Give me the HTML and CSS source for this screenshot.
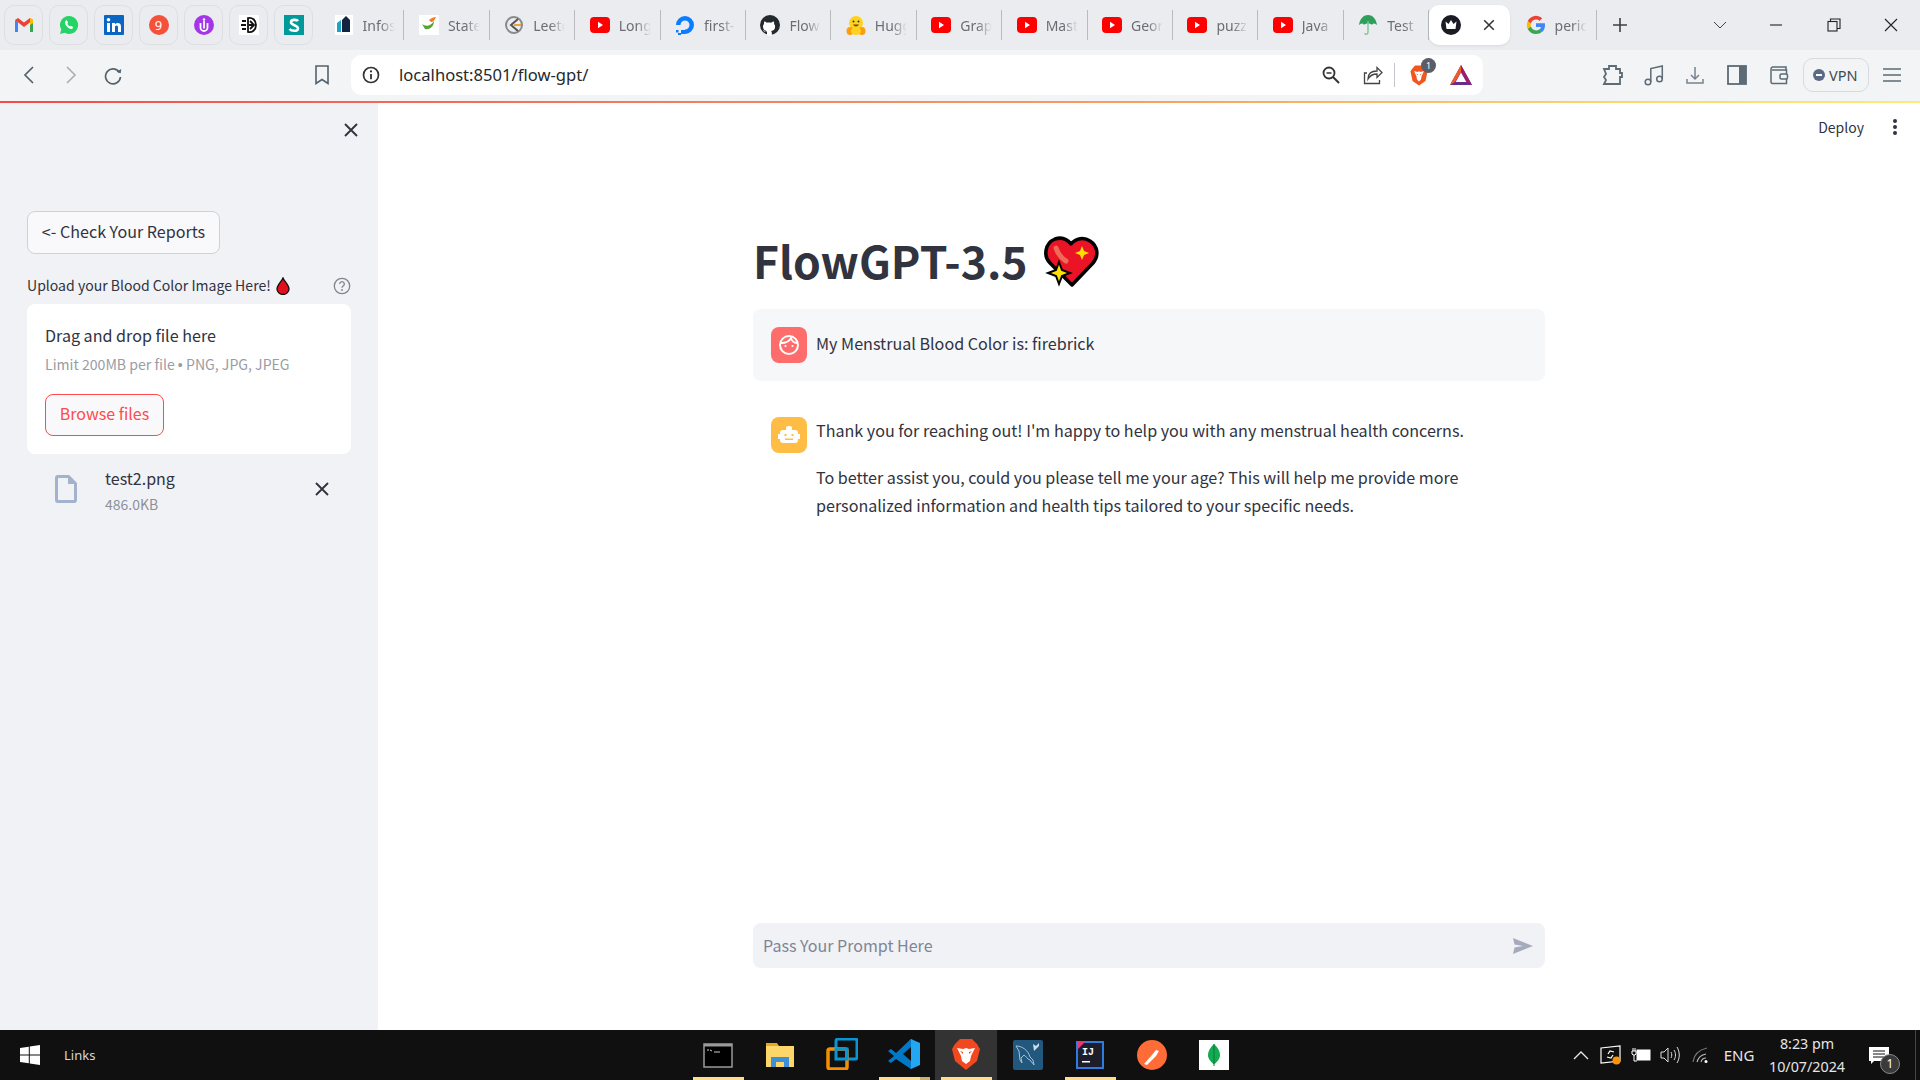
FILE: index.html
```html
<!DOCTYPE html>
<html lang="en">
<head>
<meta charset="utf-8">
<title>FlowGPT-3.5</title>
<link rel="stylesheet" href="styles.css">
</head>
<body>
<svg class="defs" aria-hidden="true">
  <symbol id="yt" viewBox="0 0 20 16"><rect width="20" height="16" y="0" rx="4" fill="#f00"/><path d="M8 4.800l5 3.200-5 3.200z" fill="#fff"/></symbol>
  <symbol id="x" viewBox="0 0 20 20"><path d="M4 4l12 12M16 4L4 16" fill="none" stroke="currentColor" stroke-width="1.900"/></symbol>
</svg>
<div class="page">
  <header class="tabstrip">
    <div class="pin"><svg width="20" height="16" viewBox="0 0 20 16"><path d="M1 15V3l3 2v10z" fill="#4285f4"/><path d="M19 15V3l-3 2v10z" fill="#34a853"/><path d="M1 3l9 7 9-7-3-2-6 4.500L4 1z" fill="#ea4335"/><path d="M16 1l3 2v3l-3 2z" fill="#fbbc04"/></svg></div>
    <div class="pin"><svg width="20" height="20" viewBox="0 0 20 20"><path d="M10 1a9 9 0 0 0-7.700 13.600L1 19l4.600-1.200A9 9 0 1 0 10 1z" fill="#25d366"/><path d="M7 5.500c-1.500 1-1.500 3 .5 5.500s4.500 3.500 6 2.500l.8-1.300-2.300-1.400-1 .8c-1-.5-2-1.500-2.700-2.800l.8-1-1.200-2.500z" fill="#fff"/></svg></div>
    <div class="pin"><svg width="20" height="20" viewBox="0 0 20 20"><rect width="20" height="20" rx="1" fill="#0a66c2"/><rect x="3" y="8" width="3" height="9" fill="#fff"/><circle cx="4.500" cy="4.800" r="1.800" fill="#fff"/><path d="M8 8h3v1.500c1-2 6-2.500 6 2V17h-3v-5c0-2-3-2-3 0v5H8z" fill="#fff"/></svg></div>
    <div class="pin"><span class="nine">9</span></div>
    <div class="pin"><svg width="20" height="20" viewBox="0 0 20 20"><circle cx="10" cy="10" r="10" fill="#a436ea"/><path d="M6.500 8v4.500a3.500 3.500 0 0 0 7 0V8" fill="none" stroke="#fff" stroke-width="1.800"/><path d="M10 6v7.500" stroke="#fff" stroke-width="1.800"/><circle cx="10" cy="4.500" r="1.200" fill="#fff"/></svg></div>
    <div class="pin"><svg width="20" height="20" viewBox="0 0 20 20"><rect width="20" height="20" fill="#fff"/><path d="M3 6h4M2 10h5M3 14h4M9 3c4-1 8 2 8 7s-4 8-8 7zM11 6l4 4-4 4M10 10h5" fill="none" stroke="#111" stroke-width="1.800"/></svg></div>
    <div class="pin"><svg width="20" height="20" viewBox="0 0 20 20"><rect width="20" height="20" fill="#009a9a"/><path d="M14 6c-1-1.500-7-2-7 1.300S14 10 14 13.500 7 16 5.500 14" fill="none" stroke="#fff" stroke-width="2.600"/></svg></div>

    <div class="tab"><svg class="fav" width="20" height="24" viewBox="0 0 20 24"><rect x="1" y="2" width="18" height="20" fill="#fff"/><path d="M3 10l4-3v12H3z" fill="#1aa5c7"/><path d="M8 7l4-4 4 4v12H8z" fill="#14233f"/></svg><span class="tab-t">Infos</span></div>
    <div class="tab"><svg class="fav" width="20" height="24" viewBox="0 0 20 24"><rect y="2" width="20" height="20" fill="#fff"/><path d="M3 11c4 3 9 2 12-3 0 6-5 9-9 8z" fill="#55a630"/><path d="M10 7c2-2 5-3 7-3-1 3-3 5-5 5z" fill="#f47b20"/></svg><span class="tab-t">State</span></div>
    <div class="tab"><svg class="fav" width="20" height="24" viewBox="0 0 20 24"><circle cx="10" cy="12" r="8" fill="none" stroke="#8a8a8a" stroke-width="2"/><path d="M14 6l-7 6 7 6" fill="none" stroke="#555" stroke-width="2"/><path d="M10 12h7" stroke="#e8a33d" stroke-width="2"/></svg><span class="tab-t">Leetc</span></div>
    <div class="tab"><svg class="fav" width="20" height="16"><use href="#yt"/></svg><span class="tab-t">Long</span></div>
    <div class="tab"><svg class="fav" width="20" height="24" viewBox="0 0 20 24"><path d="M10 21a9 9 0 1 0-9-9h4.500A4.500 4.500 0 1 1 10 16.500z" fill="#0a7cff"/><path d="M6 17h4v4H6zM3 20h3v2H3zM1 17h2.500v2.500H1z" fill="#0a7cff"/></svg><span class="tab-t">first-</span></div>
    <div class="tab"><svg class="fav" width="20" height="24" viewBox="0 0 20 24"><circle cx="10" cy="12" r="10" fill="#24292e"/><path d="M7 22v-3c-3 .5-3.500-1.500-4-2 1 0 1.500 1 2 1.500 1 .5 2 .2 2-.5-3-.5-4-2-4-4.500 0-1 .5-2 1-2.500-.2-.8 0-1.800.3-2.500 1 0 2 .7 2.500 1.200 1.500-.4 3-.4 4.500 0 .5-.5 1.500-1.200 2.500-1.200.3.700.5 1.700.3 2.500.5.500 1 1.500 1 2.500 0 2.500-1 4-4 4.500.5.500.7 1 .7 2v3z" fill="#fff"/></svg><span class="tab-t">Flow</span></div>
    <div class="tab"><svg class="fav" width="20" height="24" viewBox="0 0 20 24"><circle cx="10" cy="10" r="7" fill="#ffd21e"/><ellipse cx="4" cy="18" rx="3.500" ry="4" fill="#ff9d0b"/><ellipse cx="16" cy="18" rx="3.500" ry="4" fill="#ff9d0b"/><ellipse cx="10" cy="18" rx="5" ry="4" fill="#ffd21e"/><circle cx="7.500" cy="8.500" r="1" fill="#333"/><circle cx="12.500" cy="8.500" r="1" fill="#333"/><path d="M7 11.500c1.500 2.500 4.500 2.500 6 0z" fill="#7a3b2e"/></svg><span class="tab-t">Hugg</span></div>
    <div class="tab"><svg class="fav" width="20" height="16"><use href="#yt"/></svg><span class="tab-t">Grap</span></div>
    <div class="tab"><svg class="fav" width="20" height="16"><use href="#yt"/></svg><span class="tab-t">Mast</span></div>
    <div class="tab"><svg class="fav" width="20" height="16"><use href="#yt"/></svg><span class="tab-t">Geor</span></div>
    <div class="tab"><svg class="fav" width="20" height="16"><use href="#yt"/></svg><span class="tab-t">puzz</span></div>
    <div class="tab"><svg class="fav" width="20" height="16"><use href="#yt"/></svg><span class="tab-t">Java</span></div>
    <div class="tab"><svg class="fav" width="20" height="24" viewBox="0 0 20 24"><path d="M1 12C2 5 6 2 10 2s8 3 9 10c-2-2-4-2-5 0-1-2-7-2-8 0-1-2-3-2-5 0z" fill="#2e9e5b"/><path d="M10 8v11c0 3-3 3-3 1" fill="none" stroke="#7cc49a" stroke-width="1.400"/></svg><span class="tab-t">Test</span></div>
    <div class="tab tab-active"><svg width="20" height="20" viewBox="0 0 20 20"><circle cx="10" cy="10" r="10" fill="#1b1b24"/><path d="M4.500 6.500l3 2.500L10 5l2.500 4 3-2.500-1 7.500h-9z" fill="#fff"/></svg><svg class="tab-x" width="16" height="16"><use href="#x"/></svg></div>
    <div class="tab tab-last"><svg class="fav" width="20" height="20" viewBox="0 0 20 20"><path d="M19 10.200c0-.7 0-1.300-.2-1.900H10v3.700h5a4.300 4.300 0 0 1-1.900 2.800l3 2.300c1.800-1.600 2.900-4 2.900-6.900z" fill="#4285f4"/><path d="M10 19c2.500 0 4.500-.8 6.100-2.200l-3-2.300c-.8.600-1.900.9-3.100.9-2.400 0-4.400-1.600-5.100-3.800H1.800v2.400A9 9 0 0 0 10 19z" fill="#34a853"/><path d="M4.900 11.600a5.400 5.400 0 0 1 0-3.200V6H1.800a9 9 0 0 0 0 8z" fill="#fbbc04"/><path d="M10 4.600c1.400 0 2.600.5 3.500 1.400l2.700-2.700A9 9 0 0 0 1.800 6l3.100 2.400C5.600 6.200 7.600 4.600 10 4.600z" fill="#ea4335"/></svg><span class="tab-t">peric</span></div>
    <div class="newtab"><svg width="16" height="16" viewBox="0 0 16 16"><path d="M8 1v14M1 8h14" stroke="#3c4043" stroke-width="1.600"/></svg></div>
    <div class="winctl">
      <svg class="win-chev" width="14" height="14" viewBox="0 0 14 14"><path d="M1 4l6 6 6-6" fill="none" stroke="#444" stroke-width="1"/></svg>
      <div class="win-btn"><svg width="14" height="14" viewBox="0 0 14 14"><path d="M1 7h12" stroke="#222" stroke-width="1.100"/></svg></div>
      <div class="win-btn"><svg width="14" height="14" viewBox="0 0 14 14"><rect x="1" y="3.500" width="9" height="9.500" fill="none" stroke="#222" stroke-width="1.100"/><path d="M3.500 3.500V1H13v9.500h-3" fill="none" stroke="#222" stroke-width="1.100"/></svg></div>
      <div class="win-btn"><svg width="16" height="16" viewBox="0 0 16 16"><path d="M2 2l12 12M14 2L2 14" stroke="#222" stroke-width="1.100"/></svg></div>
    </div>
  </header>

  <nav class="toolbar">
    <div class="tb-btn"><svg width="12" height="18" viewBox="0 0 12 18"><path d="M10 1L2 9l8 8" fill="none" stroke="#54626c" stroke-width="1.700"/></svg></div>
    <div class="tb-btn"><svg width="12" height="18" viewBox="0 0 12 18"><path d="M2 1l8 8-8 8" fill="none" stroke="#a9b1b7" stroke-width="1.700"/></svg></div>
    <div class="tb-btn"><svg width="20" height="20" viewBox="0 0 20 20"><path d="M16.500 7.500A7.500 7.500 0 1 0 17.500 12" fill="none" stroke="#54626c" stroke-width="1.700"/><path d="M13.500 6.800l4.200 1.400.6-4.300z" fill="#54626c"/></svg></div>
    <div class="tb-btn tb-book"><svg width="16" height="20" viewBox="0 0 16 20"><path d="M2 1h12v17.500l-6-4-6 4z" fill="none" stroke="#54626c" stroke-width="1.600"/></svg></div>
    <div class="urlbar">
      <svg class="url-info" width="18" height="18" viewBox="0 0 18 18"><circle cx="9" cy="9" r="7.500" fill="none" stroke="#333" stroke-width="1.700"/><path d="M9 8v5.200" stroke="#333" stroke-width="1.800"/><circle cx="9" cy="5.400" r="1.100" fill="#333"/></svg>
      <span class="url-text">localhost:8501/flow-gpt/</span>
      <div class="url-right">
        <div class="url-btn"><svg width="18" height="18" viewBox="0 0 18 18"><circle cx="7" cy="7" r="5.500" fill="none" stroke="#333" stroke-width="1.800"/><path d="M11 11l6 6" stroke="#333" stroke-width="2"/><path d="M4.500 7h5" stroke="#333" stroke-width="1.500"/></svg></div>
        <div class="url-btn"><svg width="20" height="20" viewBox="0 0 20 20"><path d="M4 8H1.500v10.500h15V15" fill="none" stroke="#444" stroke-width="1.300"/><path d="M5 14c0-5 3-8 9-8V2.500l5 5-5 5V9c-4 0-7 1.500-9 5z" fill="none" stroke="#444" stroke-width="1.300"/></svg></div>
        <span class="url-sep"></span>
        <div class="url-btn badge-host"><svg width="18" height="22" viewBox="0 0 18 22"><path d="M2 5l3-3.500h8L16 5l1.500 2.500-2 9.500L9 21.500 2.500 17l-2-9.500z" fill="#f1561f"/><path d="M4 7l3.500 1L9 7.300 10.500 8 14 7l-2.500 5.500-.5 3-2 2-2-2-.5-3z" fill="#fff"/><path d="M6 9.500l2 .8v1zM12 9.500l-2 .8v1z" fill="#f1561f"/></svg><span class="badge">1</span></div>
        <div class="url-btn"><svg width="24" height="22" viewBox="0 0 24 22"><path d="M12 1l11 20H1z" fill="#662d91"/><path d="M12 1L1 21l5-3L12 8z" fill="#f15a29"/><path d="M12 1v7l6 10 5 3z" fill="#9e1f63"/><path d="M12 8.500l5.300 9.500H6.700z" fill="#fff"/></svg></div>
      </div>
    </div>
    <div class="tb-right">
      <div class="tb-btn"><svg width="22" height="22" viewBox="0 0 22 22"><path d="M2 5h5V2h7v3h4v4h2v4h-2v7H2l2-4-2-3 2-3z" fill="none" stroke="#5c6b75" stroke-width="1.800"/></svg></div>
      <div class="tb-btn tb-n"><svg width="20" height="22" viewBox="0 0 20 22"><circle cx="4" cy="18" r="2.800" fill="none" stroke="#5c6b75" stroke-width="1.500"/><circle cx="15.500" cy="15" r="2.800" fill="none" stroke="#5c6b75" stroke-width="1.500"/><path d="M6.800 18V4.500L18.300 2v13" fill="none" stroke="#5c6b75" stroke-width="1.500"/></svg></div>
      <div class="tb-btn"><svg width="18" height="20" viewBox="0 0 18 20"><path d="M9 2v12M5 10l4 4 4-4" fill="none" stroke="#76838c" stroke-width="1.500"/><path d="M1 14v4h16v-4" fill="none" stroke="#76838c" stroke-width="1.500"/></svg></div>
      <div class="tb-btn"><svg width="20" height="20" viewBox="0 0 20 20"><rect x="1" y="1" width="18" height="18" fill="none" stroke="#5c6b75" stroke-width="1.800"/><rect x="12" y="1" width="7" height="18" fill="#5c6b75"/></svg></div>
      <div class="tb-btn"><svg width="20" height="20" viewBox="0 0 20 20"><path d="M17 5V2H3.500A2 2 0 0 0 2 4v13a1.500 1.500 0 0 0 1.500 1.500H17.500V5H3" fill="none" stroke="#5c6b75" stroke-width="1.500"/><rect x="11" y="9" width="7.500" height="5" rx="1.500" fill="#f3f4f6" stroke="#5c6b75" stroke-width="1.500"/></svg></div>
      <div class="vpn"><svg width="12" height="12" viewBox="0 0 12 12"><circle cx="6" cy="6" r="6" fill="#5c6b85"/><rect x="3" y="5" width="6" height="2" fill="#fff"/></svg><span>VPN</span></div>
      <div class="tb-btn"><svg width="18" height="16" viewBox="0 0 18 16"><path d="M0 2h18M0 8h18M0 14h18" stroke="#5c6b75" stroke-width="1.500"/></svg></div>
    </div>
  </nav>
  <div class="gradline"></div>

  <div class="app">
    <aside class="sidebar">
      <div class="side-close"><svg width="20" height="20"><use href="#x"/></svg></div>
      <button class="btn-report">&lt;- Check Your Reports</button>
      <div class="up-label">
        <span>Upload your Blood Color Image Here!</span>
        <svg class="drop" width="14" height="18" viewBox="0 0 14 18"><path d="M7 1c1 3 6 7 6 11a6 5.500 0 0 1-12 0C1 8 6 4 7 1z" fill="#e2101c" stroke="#111" stroke-width="1.300"/></svg>
        <svg class="help" width="18" height="18" viewBox="0 0 18 18"><circle cx="9" cy="9" r="7.700" fill="none" stroke="#82848c" stroke-width="1.300"/><path d="M6.700 7a2.300 2.300 0 1 1 3.500 2c-.8.500-1.200.9-1.200 1.800" fill="none" stroke="#82848c" stroke-width="1.300"/><circle cx="9" cy="13" r=".9" fill="#82848c"/></svg>
      </div>
      <section class="dropzone">
        <div class="dz-title">Drag and drop file here</div>
        <div class="dz-sub">Limit 200MB per file <span class="bullet">•</span> PNG, JPG, JPEG</div>
        <button class="btn-browse">Browse files</button>
      </section>
      <div class="file-row">
        <svg class="file-ico" width="22" height="28" viewBox="0 0 22 28"><path d="M2.500 1.500h11l7 7v17a1.500 1.500 0 0 1-1 1h-17a1.500 1.500 0 0 1-1-1v-23a1.500 1.500 0 0 1 1-1z" fill="none" stroke="#a3b2cd" stroke-width="3"/><path d="M13 1.500V9h7.500z" fill="#a3b2cd"/></svg>
        <div class="file-meta">
          <div class="file-name">test2.png</div>
          <div class="file-size">486.0KB</div>
        </div>
        <svg class="file-x" width="20" height="20"><use href="#x"/></svg>
      </div>
    </aside>

    <main class="main">
      <div class="topbar">
        <span class="deploy">Deploy</span>
        <svg class="dots" width="6" height="18" viewBox="0 0 6 18"><circle cx="3" cy="3" r="2" fill="#31333f"/><circle cx="3" cy="9" r="2" fill="#31333f"/><circle cx="3" cy="15" r="2" fill="#31333f"/></svg>
      </div>
      <div class="column">
        <h1 class="title"><span>FlowGPT-3.5</span>
          <svg class="heart" width="58" height="52" viewBox="0 0 58 52"><path d="M30 49L8 27C1 20 3 7 13 3c6-2 12 0 16 5 5-6 13-7 19-3 8 5 9 15 3 22z" fill="#ea1426" stroke="#000" stroke-width="3.500" stroke-linejoin="round"/><path d="M14 12c2 6 5 10 10 13" fill="none" stroke="#ef6a55" stroke-width="5" stroke-linecap="round"/><path d="M40 10l2 5 5 2-5 2-2 5-2-5-5-2 5-2z" fill="#ffdf00"/><path d="M17 26l3 8 8 3-8 3-3 8-3-8-8-3 8-3z" fill="#ffdf00" stroke="#000" stroke-width="2"/></svg>
        </h1>
        <div class="msg msg-user">
          <div class="avatar av-user"><svg width="22" height="22" viewBox="0 0 22 22"><circle cx="11" cy="11" r="9" fill="none" stroke="#fff" stroke-width="2"/><path d="M3 9c4 0 8-1 10-5 1 3 3 5 6 5" fill="none" stroke="#fff" stroke-width="1.800"/><circle cx="7.500" cy="12" r="1.100" fill="#fff"/><circle cx="14.500" cy="12" r="1.100" fill="#fff"/></svg></div>
          <div class="msg-body"><p>My Menstrual Blood Color is: firebrick</p></div>
        </div>
        <div class="msg msg-bot">
          <div class="avatar av-bot"><svg width="22" height="22" viewBox="0 0 22 22"><path d="M5 6h12a3 3 0 0 1 3 3v7a3 3 0 0 1-3 3H5a3 3 0 0 1-3-3V9a3 3 0 0 1 3-3z" fill="#fff"/><rect x="8" y="2" width="6" height="5" rx="2" fill="#fff"/><rect x="0" y="10" width="2" height="5" fill="#fff"/><rect x="20" y="10" width="2" height="5" fill="#fff"/><rect x="6.500" y="10" width="2" height="2" fill="#ffbd45"/><rect x="13.500" y="10" width="2" height="2" fill="#ffbd45"/><rect x="7" y="14.500" width="8" height="1.500" fill="#ffbd45"/></svg></div>
          <div class="msg-body">
            <p>Thank you for reaching out! I'm happy to help you with any menstrual health concerns.</p>
            <p>To better assist you, could you please tell me your age? This will help me provide more personalized information and health tips tailored to your specific needs.</p>
          </div>
        </div>
        <div class="chatinput">
          <span>Pass Your Prompt Here</span>
          <svg width="22" height="18" viewBox="0 0 22 18"><path d="M1 1l20 8-20 8 1.500-6.500L11 9l-8.500-1.500z" fill="#a6abbb"/></svg>
        </div>
      </div>
    </main>
  </div>

  <footer class="taskbar">
    <div class="tb-left">
      <svg class="win" width="20" height="20" viewBox="0 0 20 20"><path d="M0 3l8.800-1.300v7.800H0zM9.800 1.500L20 0v9.500H9.800zM0 10.500h8.800v7.800L0 17zM9.800 10.500H20V20L9.800 18.500z" fill="#fff"/></svg>
      <span class="links">Links</span>
    </div>
    <div class="apps">
      <div class="app-slot"><svg width="30" height="30" viewBox="0 0 30 30"><rect x="1" y="4" width="28" height="23" fill="#000" stroke="#9a9a9a" stroke-width="1.500"/><rect x="1" y="4" width="28" height="2.500" fill="#9a9a9a"/><path d="M4 10h2M7 10l2 1M11 12h6" stroke="#ccc" stroke-width="1"/></svg><span class="ul"></span></div>
      <div class="app-slot"><svg width="30" height="30" viewBox="0 0 30 30"><path d="M1 3h11l2 3h15v21H1z" fill="#e5a823"/><rect x="1" y="6" width="28" height="21" fill="#fcd669"/><path d="M6 27V17h18v10h-5v-5h-8v5z" fill="#3e8fd8"/></svg><span class="ul ul-none"></span></div>
      <div class="app-slot"><svg width="32" height="32" viewBox="0 0 32 32"><path d="M10 10V3a2 2 0 0 1 2-2h17a2 2 0 0 1 2 2v16a2 2 0 0 1-2 2h-7" fill="none" stroke="#0795d6" stroke-width="3"/><rect x="2" y="11" width="19" height="20" rx="2" fill="none" stroke="#f38f00" stroke-width="3.500"/><rect x="10" y="11" width="11" height="10" fill="none" stroke="#0795d6" stroke-width="3"/></svg><span class="ul ul-none"></span></div>
      <div class="app-slot"><svg width="32" height="32" viewBox="0 0 32 32"><path d="M23 1l9 4v22l-9 4L8 17z" fill="#22a7f0"/><path d="M23 1L8 15 3 11l-3 2 6 5-6 5 3 2 5-4 15 10z" fill="#0078c8"/><path d="M23 9l-8 7 8 7z" fill="#101010"/></svg><span class="ul ul-split"></span></div>
      <div class="app-slot app-on"><svg width="28" height="32" viewBox="0 0 28 32"><path d="M3 6l5-5h12l5 5 3 5-3 12-11 9-11-9L0 11z" fill="#f1481f"/><path d="M5 10l6 1 3-1 3 1 6-1-4 8-1 5-4 3-4-3-1-5z" fill="#fff"/><path d="M8 13l3 1v2zM20 13l-3 1v2z" fill="#f1481f"/></svg><span class="ul"></span></div>
      <div class="app-slot"><svg width="30" height="30" viewBox="0 0 30 30"><rect width="30" height="30" rx="2" fill="#23587e"/><path d="M3 6c6 0 12 4 14 11l3 3 1 5-4-5c-3-1-4-4-6-5l-3 3 1 5-2-3-1-9z" fill="none" stroke="#a6c2d4" stroke-width="1"/><path d="M20 4l3 2 3-3v3l-3 3-2 2z" fill="#cfdde6"/></svg><span class="ul ul-none"></span></div>
      <div class="app-slot"><svg width="28" height="30" viewBox="0 0 28 30"><rect x="1" y="2" width="26" height="26" fill="#1d1d2b" stroke="#2f7ce0" stroke-width="2"/><path d="M1 2h8L1 10z" fill="#f0346f"/><text x="6" y="15" class="ij">IJ</text><rect x="6" y="21" width="8" height="1.500" fill="#fff"/></svg><span class="ul"></span></div>
      <div class="app-slot"><svg width="30" height="30" viewBox="0 0 30 30"><circle cx="15" cy="15" r="15" fill="#ff6c37"/><path d="M7 24l8-9 4-5 3 1-3 5-9 9z" fill="#fff"/></svg><span class="ul ul-none"></span></div>
      <div class="app-slot"><svg width="30" height="30" viewBox="0 0 30 30"><rect width="30" height="30" fill="#fff"/><path d="M15 4c4 4 6 7 6 11s-3 7-5.500 9h-1C12 22 9 19 9 15s2-7 6-11z" fill="#13aa52"/><path d="M15 4v22" stroke="#0e7a3b" stroke-width="1"/></svg><span class="ul ul-none"></span></div>
    </div>
    <div class="tray">
      <div class="tray-i"><svg width="16" height="10" viewBox="0 0 16 10"><path d="M1 9l7-7 7 7" fill="none" stroke="#e8e8e8" stroke-width="1.300"/></svg></div>
      <div class="tray-i"><svg width="22" height="20" viewBox="0 0 22 20"><path d="M1 3l19-2v15L1 18z" fill="none" stroke="#fff" stroke-width="1.200"/><path d="M14 7l-4-1-2 3M7 12l4 1 2-3" fill="none" stroke="#fff" stroke-width="1.200"/><circle cx="16.500" cy="15.500" r="4" fill="#ff9500"/></svg></div>
      <div class="tray-i"><svg width="20" height="14" viewBox="0 0 20 14"><rect x="6" y="2" width="13" height="10" fill="#fff" stroke="#fff"/><path d="M2 0v3M4 0v3M1 3h4v3l-1 1H2L1 6zM3 7v6h3" fill="none" stroke="#fff" stroke-width="1"/></svg></div>
      <div class="tray-i"><svg width="22" height="18" viewBox="0 0 22 18"><path d="M1 6h3l4-4v14l-4-4H1z" fill="none" stroke="#ddd" stroke-width="1"/><path d="M11 6c1 2 1 4 0 6M14 4c2 3 2 7 0 10M17 1c3 5 3 11 0 16" fill="none" stroke="#ddd" stroke-width="1"/></svg></div>
      <div class="tray-i"><svg width="18" height="16" viewBox="0 0 18 16"><path d="M1 15C2 8 6 3 15 1" fill="none" stroke="#777" stroke-width="1.100"/><path d="M5 15c1-4 4-7 9-8M9 15c.5-2 2-4 5-4" fill="none" stroke="#bbb" stroke-width="1.100"/><circle cx="14" cy="14.500" r="1.500" fill="#fff"/></svg></div>
      <span class="tray-eng">ENG</span>
      <div class="clock"><span>8:23 pm</span><span>10/07/2024</span></div>
      <div class="notif"><svg width="20" height="17" viewBox="0 0 20 17"><path d="M0 0h20v14H5l-3 3v-3H0z" fill="#fff"/><path d="M4 4h12M4 7h12M4 10h12" stroke="#101010" stroke-width="1"/></svg><span class="notif-n">1</span></div>
      <span class="sliver"></span>
    </div>
  </footer>
</div>
</body>
</html>
```
FILE: styles.css
```css
* { box-sizing: border-box; }
html, body { margin: 0; height: 100%; }
body { font-family: "Noto Sans CJK SC", "Noto Sans", sans-serif; color: #31333f; overflow: hidden; }
.defs { display: none; }
.page { display: flex; flex-direction: column; height: 1080px; width: 1920px; }

/* tab strip */
.tabstrip { height: 50px; flex: none; background: #ebecf0; display: flex; align-items: flex-start; padding: 5px 0 0 4px; font-family: "Noto Sans", sans-serif; }
.pin { width: 39px; height: 40px; margin-right: 6px; border: 1px solid #dedfe4; border-radius: 10px; display: flex; align-items: center; justify-content: center; }
.nine { width: 20px; height: 20px; border-radius: 50%; background: #f4503a; color: #fff; font-size: 13px; line-height: 20px; text-align: center; }
.tab { width: 85.4px; height: 30px; margin-top: 5px; display: flex; align-items: center; padding-left: 14.5px; border-right: 1px solid #b9bbc0; color: #6a6d72; font-size: 14px; }
.fav { flex: none; width: 20px; }
.tab-t { margin-left: 9px; width: 38px; flex: none; white-space: nowrap; -webkit-mask-image: linear-gradient(90deg, #000 45%, transparent 84%); mask-image: linear-gradient(90deg, #000 45%, transparent 84%); }
.tab-active { width: 81px; height: 40px; margin: 0 1px 0 0; border: 0; background: #fff; border-radius: 10px; padding: 0 13px 0 12px; justify-content: space-between; color: #333; box-shadow: 0 1px 3px rgba(0,0,0,.08); }
.tab-x { color: #333; }
.tab-last { width: 86px; }
.newtab { width: 46px; height: 40px; display: flex; align-items: center; justify-content: center; }
.winctl { display: flex; align-items: center; height: 40px; margin-left: auto; }
.win-chev { margin-right: 21px; }
.win-btn { width: 57.5px; display: flex; justify-content: center; }

/* toolbar */
.toolbar { height: 51px; flex: none; background: #f3f4f6; display: flex; align-items: center; padding: 0 7px 1px 8px; font-family: "Noto Sans", sans-serif; }
.tb-btn { width: 42px; height: 50px; display: flex; align-items: center; justify-content: center; flex: none; }
.tb-n { width: 40px; }
.tb-book { margin-left: 167px; margin-right: 8px; }
.urlbar { width: 1132px; height: 40px; background: #fff; border-radius: 10px; display: flex; align-items: center; padding: 0 1px 0 11px; }
.url-info { flex: none; }
.url-text { margin: -2px 0 0 19px; font-size: 16.6px; color: #26292c; white-space: nowrap; }
.url-right { margin-left: auto; display: flex; align-items: center; }
.url-btn { width: 42px; height: 40px; display: flex; align-items: center; justify-content: center; position: relative; }
.url-sep { width: 1px; height: 24px; background: #c5c7cb; margin: 0 3px 0 0; }
.badge { position: absolute; left: 23px; top: 3px; width: 15px; height: 15px; border-radius: 50%; background: #5b5e68; color: #fff; font-size: 9px; line-height: 15px; text-align: center; }
.tb-right { margin-left: auto; display: flex; align-items: center; }
.vpn { width: 66px; height: 34px; margin: 0 2px 0 3px; border: 1px solid #d5dbe1; border-radius: 10px; display: flex; align-items: center; padding-left: 9px; gap: 4px; font-size: 14.5px; color: #3e4a52; }
.gradline { height: 2px; flex: none; background: linear-gradient(90deg, #f44b4b 0%, #f47c5e 35%, #f8a05f 60%, #fdd76e 85%, #fdea7c 100%); }

/* app */
.app { flex: 1; min-height: 0; display: flex; }
.sidebar { width: 378px; flex: none; background: #f0f2f6; padding: 0 27px; display: flex; flex-direction: column; align-items: stretch; }
.side-close { height: 54px; margin: 0 -10px 54px 0; display: flex; align-items: center; justify-content: flex-end; color: #31333f; }
.btn-report { align-self: flex-start; width: 193px; height: 43px; background: #f9f9fb; border: 1px solid #d0d1d6; border-radius: 8px; font: 400 16.1px/24px "Noto Sans CJK SC", sans-serif; color: #31333f; padding: 0 0 3px; }
.up-label { margin-top: 20px; height: 24px; display: flex; align-items: center; font-size: 14.05px; line-height: 24px; gap: 5px; }
.up-label span { margin-top: -2px; }
.drop { flex: none; }
.help { margin-left: auto; }
.dropzone { margin-top: 6px; height: 150px; background: #fff; border-radius: 8px; padding: 19px 18px 0; }
.dz-title { font-size: 16.1px; line-height: 24px; }
.dz-sub { margin-top: 7px; font-size: 14.1px; line-height: 20px; color: #9a9ca5; }
.bullet { font-family: "Liberation Sans", sans-serif; }
.btn-browse { margin-top: 19px; width: 119px; height: 42px; background: #f9f9fb; border: 1px solid #ff4b4b; border-radius: 8px; color: #ff4b4b; font: 400 16px/24px "Noto Sans CJK SC", sans-serif; padding: 0 0 4px; }
.file-row { padding: 12px 19px 0 28px; display: flex; align-items: center; }
.file-ico { flex: none; margin: 0 0 2px; }
.file-meta { margin-left: 28px; }
.file-name { font-size: 16px; line-height: 24px; }
.file-size { margin-top: 4px; font-size: 14px; line-height: 20px; color: #8e9099; }
.file-x { margin: 0 0 2px auto; color: #31333f; }

/* main */
.main { flex: 1; min-width: 0; background: #fff; display: flex; flex-direction: column; align-items: center; }
.topbar { align-self: stretch; height: 48px; flex: none; display: flex; align-items: center; justify-content: flex-end; padding-right: 22px; }
.deploy { font-size: 14px; line-height: 20px; }
.dots { margin-left: 28px; }
.column { width: 792px; flex: 1; min-height: 0; display: flex; flex-direction: column; padding-bottom: 62px; }
.title { margin: 79px 0 15px; font-size: 44.5px; line-height: 60px; font-weight: 700; height: 64px; display: flex; align-items: flex-start; gap: 14px; color: #31333f; }
.heart { flex: none; margin-top: 6px; }
.msg { display: flex; gap: 9px; padding: 18px; border-radius: 8px; }
.msg-user { background: #f6f7f9; height: 72px; }
.msg-bot { margin-top: 18px; }
.avatar { width: 36px; height: 36px; flex: none; border-radius: 8px; display: flex; align-items: center; justify-content: center; }
.av-user { background: #ff6c6c; }
.av-bot { background: #ffbd45; }
.msg-body { flex: 1; font-size: 16.12px; line-height: 28px; margin-top: -1px; }
.msg-user .msg-body { padding-top: 3px; }
.msg-body p { margin: 0 0 19px; }
.msg-body p:last-child { margin-bottom: 0; }
.chatinput { margin-top: auto; height: 45px; background: #f0f2f6; border-radius: 8px; display: flex; align-items: center; justify-content: space-between; padding: 0 11px 0 10px; font-size: 16.05px; color: #808495; }
.chatinput span { margin-top: -2px; }

/* taskbar */
.taskbar { height: 50px; flex: none; background: #101010; display: flex; font-family: "Noto Sans", sans-serif; color: #e6e6e6; }
.tb-left { width: 687px; flex: none; display: flex; align-items: center; padding-left: 20px; }
.links { margin-left: 24px; font-size: 13px; color: #d8d8d8; }
.apps { display: flex; flex: none; }
.app-slot { width: 62px; height: 50px; display: flex; flex-direction: column; align-items: center; justify-content: flex-end; gap: 7px; }
.app-on { background: #333; }
.ul { width: 51px; height: 3px; background: #ffdd8a; flex: none; }
.ul-none { background: transparent; }
.ul-split { background: linear-gradient(90deg, #ffdd8a 80%, #c9b070 80%); }
.ij { font: 700 10px "Liberation Mono", monospace; fill: #fff; }
.tray { margin-left: auto; display: flex; align-items: center; padding-right: 4px; }
.tray-i { width: 30px; display: flex; justify-content: center; }
.tray-eng { width: 46px; text-align: center; font-size: 15px; }
.clock { width: 90px; display: flex; flex-direction: column; align-items: center; font-size: 14.3px; line-height: 23px; }
.notif { width: 54px; margin-right: 9px; display: flex; justify-content: center; position: relative; }
.notif-n { position: absolute; left: 28px; top: 7px; width: 20px; height: 20px; border-radius: 50%; background: #3a3a3a; border: 1px solid #888; color: #fff; font-size: 12px; line-height: 18px; text-align: center; }
.sliver { width: 1px; height: 50px; background: #444; }
```
